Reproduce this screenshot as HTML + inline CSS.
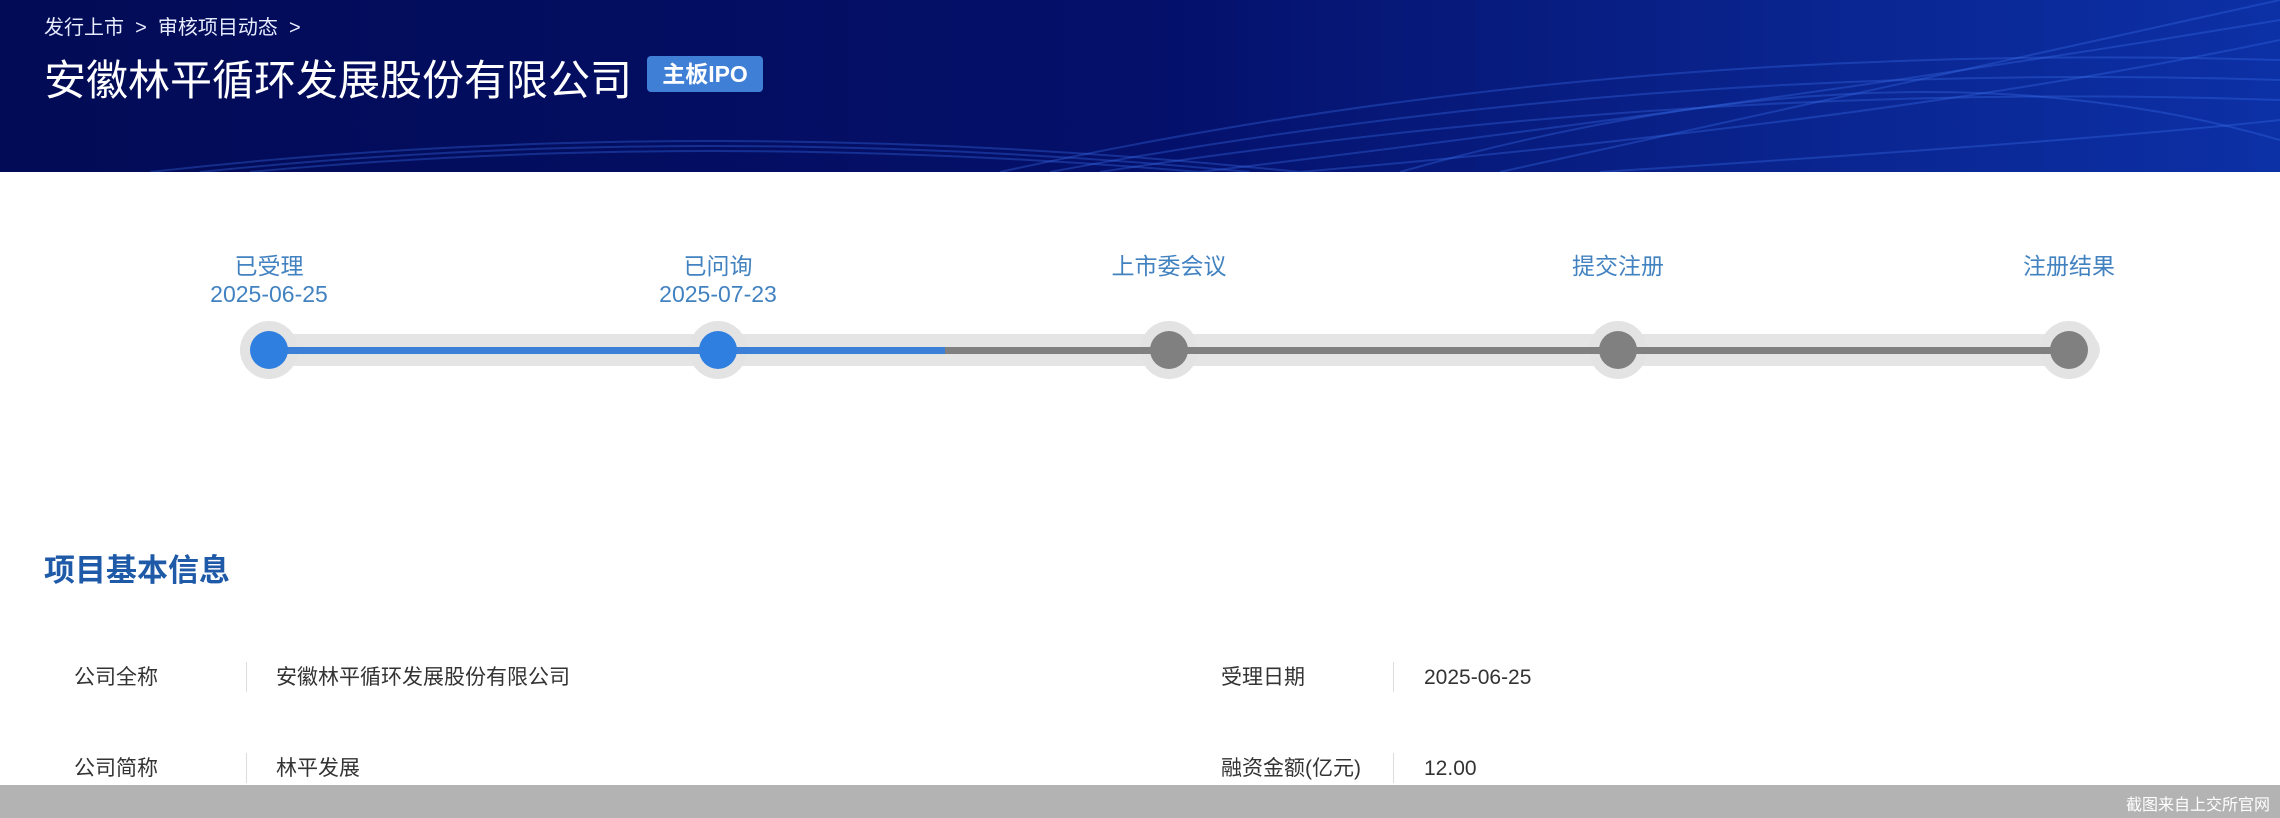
<!DOCTYPE html>
<html><head><meta charset="utf-8"><style>
*{margin:0;padding:0;box-sizing:border-box}
body{width:2280px;height:818px;overflow:hidden;background:#fff;font-family:"Liberation Sans","Noto Sans CJK SC",sans-serif;position:relative}
.hdr{position:absolute;left:0;top:0;width:2280px;height:172px;background:linear-gradient(90deg,#020b55 0%,#04106a 50%,#0a2590 80%,#0c30a6 100%);overflow:hidden}
.bc{position:absolute;left:44px;top:11px;color:#e8ecff;font-size:20px}
.title{position:absolute;left:44px;top:47px;color:#fff;font-size:42px;letter-spacing:0}
.badge{position:absolute;left:647px;top:56px;width:116px;height:36px;background:#3f7fd6;color:#fff;font-size:23px;border-radius:4px;text-align:center;line-height:36px;font-weight:bold}
.lbl{position:absolute;color:#4282c0;font-size:23px;text-align:center;width:200px;line-height:28px}
.track{position:absolute;left:240px;top:334px;width:1860px;height:32px;background:#e5e5e5;border-radius:16px}
.line{position:absolute;top:347px;height:7px;z-index:2}
.node{position:absolute;width:58px;height:58px;border-radius:50%;background:#e3e3e3;top:321px;z-index:1}
.in{position:absolute;width:38px;height:38px;border-radius:50%;top:331px;z-index:3}
.sec{position:absolute;left:44px;top:545px;font-size:31px;font-weight:bold;color:#1f5aa8}
.t{position:absolute;font-size:21px;color:#333;height:30px;line-height:30px}
.dv{position:absolute;width:1px;height:30px;background:#ddd}
.foot{position:absolute;left:0;top:785px;width:2280px;height:33px;background:#b3b3b3}
.foot span{position:absolute;right:10px;top:6px;color:#fff;font-size:16px}
</style></head><body>
<div class="hdr">
<svg width="2280" height="172" style="position:absolute;left:0;top:0">
<g fill="none" stroke="#3a6ee8" stroke-opacity="0.35" stroke-width="2">
<path d="M150 172 Q700 110 1300 172"/><path d="M200 172 Q700 120 1250 172"/><path d="M250 172 Q700 130 1200 172"/>
<path d="M1000 172 Q1600 40 2280 60"/><path d="M1050 172 Q1650 60 2280 80"/><path d="M1100 172 Q1700 80 2280 100"/>
<path d="M1200 172 Q1800 100 2280 20"/><path d="M1300 172 Q1900 120 2280 40"/><path d="M1500 172 Q2000 60 2280 0"/>
<path d="M1600 172 Q2100 140 2280 120"/><path d="M1400 172 Q1900 30 2280 140"/>
</g></svg>
<div class="bc">发行上市 &nbsp;&gt;&nbsp; 审核项目动态 &nbsp;&gt;</div>
<div class="title">安徽林平循环发展股份有限公司</div>
<div class="badge">主板IPO</div>
</div>

<div class="lbl" style="left:169px;top:252px">已受理<br>2025-06-25</div>
<div class="lbl" style="left:618px;top:252px">已问询<br>2025-07-23</div>
<div class="lbl" style="left:1069px;top:252px">上市委会议</div>
<div class="lbl" style="left:1518px;top:252px">提交注册</div>
<div class="lbl" style="left:1969px;top:252px">注册结果</div>

<div class="track"></div>
<div class="line" style="left:269px;width:676px;background:#3b80d6"></div>
<div class="line" style="left:945px;width:1124px;background:#808080"></div>
<div class="node" style="left:240px"></div><div class="in" style="left:250px;background:#2f7fe0"></div>
<div class="node" style="left:689px"></div><div class="in" style="left:699px;background:#2f7fe0"></div>
<div class="node" style="left:1140px"></div><div class="in" style="left:1150px;background:#808080"></div>
<div class="node" style="left:1589px"></div><div class="in" style="left:1599px;background:#808080"></div>
<div class="node" style="left:2040px"></div><div class="in" style="left:2050px;background:#808080"></div>

<div class="sec">项目基本信息</div>
<div class="t" style="left:74px;top:663px">公司全称</div><div class="dv" style="left:246px;top:662px"></div>
<div class="t" style="left:276px;top:663px">安徽林平循环发展股份有限公司</div>
<div class="t" style="left:1221px;top:663px">受理日期</div><div class="dv" style="left:1393px;top:662px"></div>
<div class="t" style="left:1424px;top:663px">2025-06-25</div>
<div class="t" style="left:74px;top:754px">公司简称</div><div class="dv" style="left:246px;top:753px"></div>
<div class="t" style="left:276px;top:754px">林平发展</div>
<div class="t" style="left:1221px;top:754px">融资金额(亿元)</div><div class="dv" style="left:1393px;top:753px"></div>
<div class="t" style="left:1424px;top:754px">12.00</div>
<div class="foot"><span>截图来自上交所官网</span></div>
</body></html>
